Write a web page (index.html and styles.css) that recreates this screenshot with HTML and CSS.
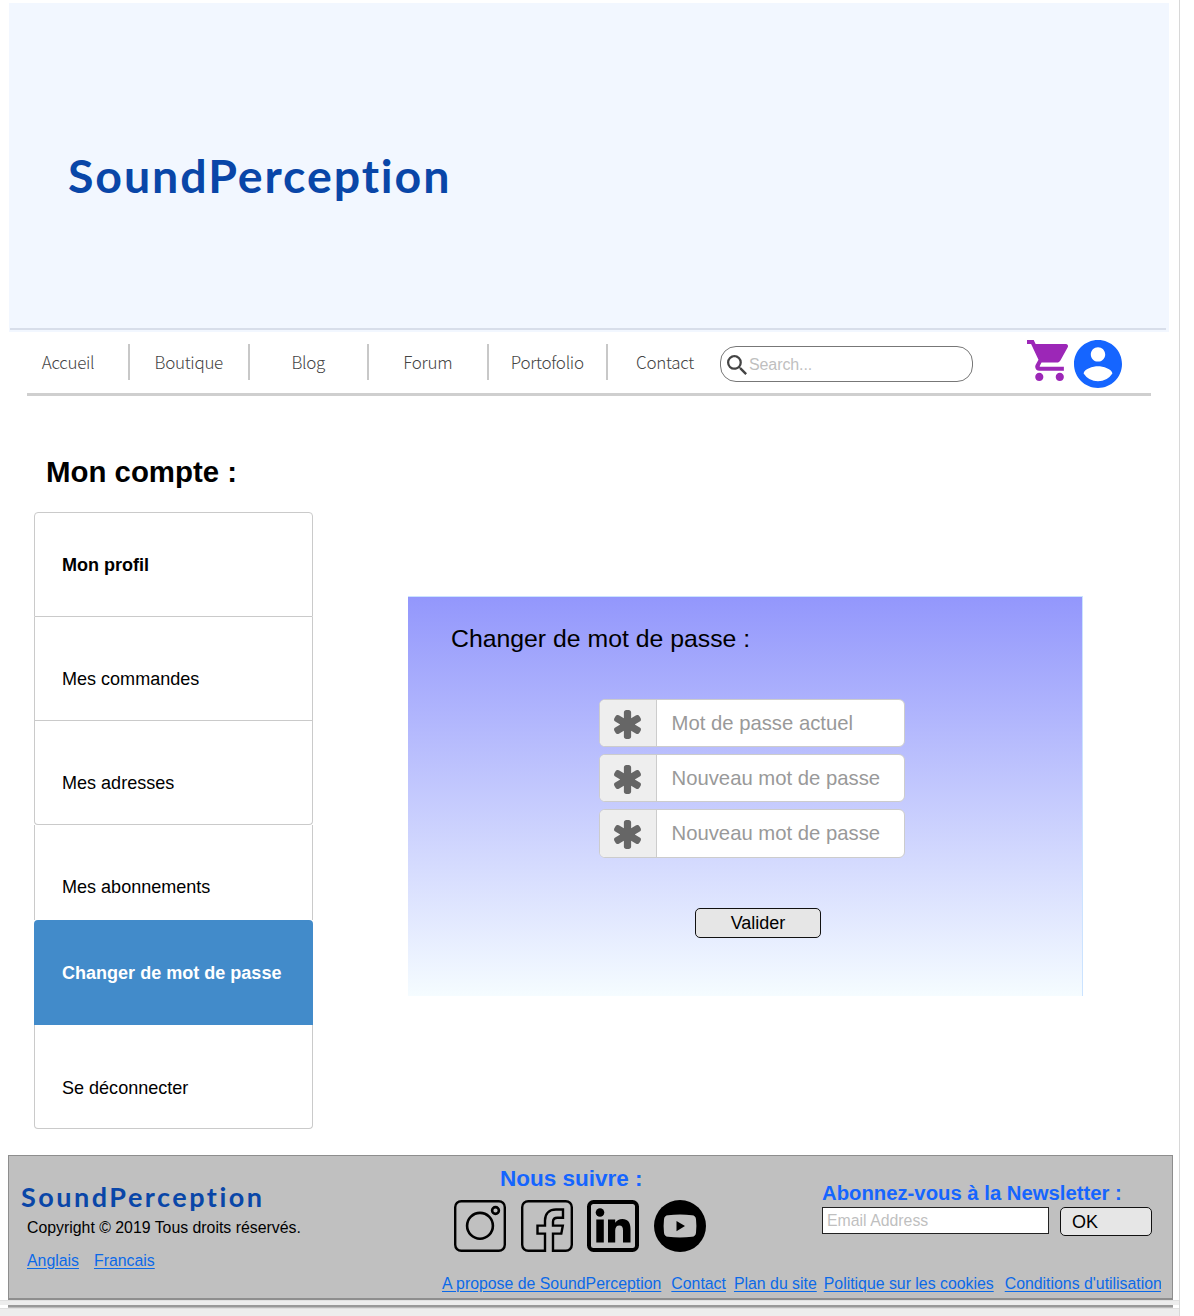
FILE: index.html
```html
<!DOCTYPE html>
<html lang="fr">
<head>
<meta charset="utf-8">
<title>SoundPerception – Mon compte</title>
<link rel="stylesheet" href="styles.css">
</head>
<body>
<div class="page">
  <header class="banner"><div class="logo">SoundPerception</div></header>
  <nav class="nav">
    <a class="nav-item">Accueil</a>
    <a class="nav-item">Boutique</a>
    <a class="nav-item">Blog</a>
    <a class="nav-item">Forum</a>
    <a class="nav-item">Portofolio</a>
    <a class="nav-item">Contact</a>
    <div class="search">
      <svg class="search-icon" viewBox="3 3 17.5 17.5"><path d="M15.5 14h-.79l-.28-.27A6.47 6.47 0 0 0 16 9.5 6.5 6.5 0 1 0 9.500 16c1.610 0 3.090-.59 4.230-1.570l.27.28v.79l5 4.990L20.490 19l-4.990-5zm-6 0C7.010 14 5 11.990 5 9.500S7.010 5 9.500 5 14 7.010 14 9.500 11.990 14 9.500 14z"/></svg>
      <span>Search...</span>
    </div>
    <svg class="cart" viewBox="1 2 20.500 20"><path d="M7 18c-1.100 0-1.990.9-1.990 2S5.900 22 7 22s2-.9 2-2-.9-2-2-2zM1 2v2h2l3.600 7.590-1.350 2.450c-.16.28-.25.61-.25.96 0 1.100.9 2 2 2h12v-2H7.420c-.14 0-.25-.11-.25-.25l.03-.12.9-1.630h7.450c.75 0 1.410-.41 1.750-1.030l3.580-6.490A1 1 0 0 0 20 4H5.210l-.94-2H1zm16 16c-1.100 0-1.990.9-1.990 2s.89 2 1.990 2 2-.9 2-2-.9-2-2-2z"/></svg>
    <svg class="user" viewBox="2 2 20 20"><path d="M12 2C6.480 2 2 6.480 2 12s4.480 10 10 10 10-4.480 10-10S17.520 2 12 2zm0 3c1.660 0 3 1.340 3 3s-1.340 3-3 3-3-1.340-3-3 1.340-3 3-3zm0 14.200a7.200 7.200 0 0 1-6-3.220c.03-1.990 4-3.080 6-3.080 1.990 0 5.970 1.090 6 3.080a7.200 7.200 0 0 1-6 3.220z"/></svg>
  </nav>
  <main class="main">
    <aside class="account">
      <h1>Mon compte :</h1>
      <ul class="menu">
        <li class="first">Mon profil</li>
        <li>Mes commandes</li>
        <li class="third">Mes adresses</li>
        <li class="short">Mes abonnements</li>
        <li class="active">Changer de mot de passe</li>
        <li class="last">Se déconnecter</li>
      </ul>
    </aside>
    <section class="panel">
      <h2>Changer de mot de passe :</h2>
      <div class="fields">
        <div class="field"><span class="addon"><svg viewBox="128 128 1536 1536"><path id="star" d="M1546 1050q46 26 59.500 77.500t-12.500 97.500l-64 110q-26 46-77.500 59.500t-97.500-12.500l-266-153v307q0 52-38 90t-90 38h-128q-52 0-90-38t-38-90v-307l-266 153q-46 26-97.500 12.500t-77.500-59.500l-64-110q-26-46-12.500-97.500t59.500-77.500l266-154-266-154q-46-26-59.500-77.500t12.500-97.500l64-110q26-46 77.500-59.500t97.500 12.500l266 153v-307q0-52 38-90t90-38h128q52 0 90 38t38 90v307l266-153q46-26 97.500-12.500t77.500 59.500l64 110q26 46 12.500 97.500t-59.500 77.500l-266 154z"/></svg></span><span class="hint">Mot de passe actuel</span></div>
        <div class="field"><span class="addon"><svg viewBox="128 128 1536 1536"><use href="#star"/></svg></span><span class="hint">Nouveau mot de passe</span></div>
        <div class="field"><span class="addon"><svg viewBox="128 128 1536 1536"><use href="#star"/></svg></span><span class="hint">Nouveau mot de passe</span></div>
      </div>
      <button class="submit">Valider</button>
    </section>
  </main>
  <footer class="footer">
    <div class="brand">
      <div class="logo-small">SoundPerception</div>
      <p>Copyright © 2019 Tous droits réservés.</p>
      <div class="langs"><a>Anglais</a><a>Francais</a></div>
    </div>
    <div class="right">
      <div class="top">
        <div class="follow">
          <h3>Nous suivre :</h3>
          <div class="social">
            <svg viewBox="0 0 52 52" fill="none" stroke="#000"><rect x="1.200" y="1.200" width="49.600" height="49.600" rx="6" stroke-width="2.400"/><circle cx="26" cy="25.800" r="12.900" stroke-width="2.600"/><circle cx="41.500" cy="10.500" r="3.400" stroke-width="2.600"/></svg>
            <svg viewBox="0 0 52 52" fill="none" stroke="#000" stroke-width="2.400"><path d="M24 50.800V33.600h-7.500v-8h7.500V20.500c0-7 4.500-11 11-11h7v8.300h-5.500c-3 0-4.500 1.200-4.500 4v3.800h9.800l-1.500 8H32v17.200h12.800a6 6 0 0 0 6-6V7.200a6 6 0 0 0-6-6H7.200a6 6 0 0 0-6 6v37.600a6 6 0 0 0 6 6z"/></svg>
            <svg viewBox="0 0 52 52"><rect x="2" y="2" width="48" height="48" rx="4.500" fill="none" stroke="#000" stroke-width="4"/><circle cx="13" cy="12.500" r="4.300"/><path d="M9.300 19.500h7.500v23H9.300zM21 19.500h7.200v3.200c1.500-2.400 4-3.800 7.200-3.800 5.500 0 8.100 3.600 8.100 10v13.600H36V30.400c0-3.200-1-5-3.600-5-2.700 0-4.200 1.900-4.200 5v12.100H21z"/></svg>
            <svg viewBox="0 0 52 52"><circle cx="26" cy="26" r="26"/><path fill="#c0c0c0" d="M14 15.200q12-1.400 24 0 3.600.3 4 4 .8 6.800 0 13.600-.4 3.700-4 4-12 1.400-24 0-3.600-.3-4-4-.8-6.800 0-13.600.4-3.700 4-4z"/><path d="M22.500 21v10.200l8.500-5.100z"/></svg>
          </div>
        </div>
        <div class="news">
          <h3>Abonnez-vous à la Newsletter :</h3>
          <div class="form"><div class="email">Email Address</div><button class="ok">OK</button></div>
        </div>
      </div>
      <div class="links"><a>A propose de SoundPerception</a><a>Contact</a><a>Plan du site</a><a>Politique sur les cookies</a><a>Conditions d'utilisation</a></div>
    </div>
  </footer>
  <div class="bar bar-top"></div>
  <div class="rule"></div>
  <div class="bar bar-bottom"></div>
</div>
</body>
</html>
```
FILE: styles.css
```css
* { box-sizing: border-box; }
body { margin: 0; background: #fff; color: #000; font-family: "Liberation Sans", Arial, sans-serif; }
h1, h2, h3, p, ul { margin: 0; padding: 0; }
svg { display: block; flex: none; }
button { font: inherit; color: #000; }
.page { width: 1180px; height: 1316px; padding-top: 3px; border-right: 1px solid #d8d8d8; overflow: hidden; }

.banner { width: 1160px; height: 329px; margin-left: 9px; padding: 142px 0 0 59px; background: linear-gradient(#d8deea, #d8deea) 1px 325px / 1156px 2px no-repeat, #f2f7ff; }
.logo { font: 700 46.500px/60px Lato, sans-serif; letter-spacing: 1.900px; color: #0946a8; }

.nav { display: flex; width: 1124px; height: 64px; margin-left: 27px; padding-top: 8px; border-bottom: 3px solid #cfcfcf; }
.nav-item { flex: none; width: 119.500px; height: 36px; margin-top: 4px; border-right: 2px solid #c8c8c8; font: 300 17px/36px "Noto Sans CJK SC", sans-serif; letter-spacing: -.3px; color: #444; text-align: center; }
.nav-item:first-child { width: 103px; padding-right: 19px; }
.nav-item:nth-child(6) { width: 114px; border: 0; }
.search { flex: none; display: flex; align-items: center; width: 253px; height: 36px; margin: 6px 0 0 -2px; padding: 1px 0 0 6px; border: 1px solid #777; border-radius: 16px; font-size: 16px; letter-spacing: -.1px; color: #bfbfbf; }
.search-icon { width: 20px; height: 20px; margin-right: 2px; fill: #444; }
.cart { width: 42px; height: 41px; margin-left: 54px; fill: #9c27b7; }
.user { width: 48px; height: 48px; margin-left: 5px; fill: #1565ff; }

.main { display: flex; height: 759px; }
.account { width: 279px; margin-left: 34px; }
h1 { margin: 58px 0 0 12px; font-size: 29.400px; line-height: 36px; }
.menu { margin-top: 22px; list-style: none; font-size: 18.050px; }
.menu li { height: 104px; padding: 21px 0 0 27px; border: 1px solid #cacaca; border-top: 0; line-height: 82px; white-space: nowrap; }
.menu .first { height: 105px; padding-top: 1px; border-top: 1px solid #cacaca; border-radius: 4px 4px 0 0; line-height: 103px; font-weight: 700; }
.menu .third { border-radius: 0 0 4px 4px; }
.menu .short { height: 95px; border-bottom: 0; }
.menu .active { height: 105px; padding: 1px 0 0 28px; border: 0; border-radius: 4px 4px 0 0; background: #428bca; color: #fff; line-height: 105px; font-weight: 700; }
.menu .last { padding-top: 22px; border-radius: 0 0 4px 4px; }

.panel { width: 675px; height: 400px; margin: 200px 0 0 95px; padding: 26px 0 0 42px; border: 1px solid #cbe3ff; border-bottom: 0; border-left: 0; padding-left: 43px; background: linear-gradient(#9397fc, #f5fcff); }
h2 { font-size: 24.800px; font-weight: 400; line-height: 32px; }
.fields { display: flex; flex-direction: column; gap: 7px; margin: 44px 0 0 148px; }
.field { display: flex; width: 306px; height: 48.200px; border: 1px solid #ccc; border-radius: 6px; background: #fff; overflow: hidden; font-size: 20.300px; }
.addon { display: flex; align-items: center; justify-content: center; width: 57px; border-right: 1px solid #ccc; background: #eee; }
.addon svg { width: 29px; height: 29px; margin: 2px 1px 0 0; fill: #666; }
.hint { padding-left: 14.500px; color: #999; line-height: 46px; }
.submit { display: block; width: 126px; height: 30px; margin: 50px 0 0 244px; padding: 1px 0 0; border: 1.500px solid #111; border-radius: 5px; background: #e6e6e6; font-size: 18px; }

.footer { display: flex; width: 1165px; height: 145px; margin-left: 8px; border: 1px solid #8e8e8e; border-bottom-width: 2px; background: #c0c0c0; font-size: 15.850px; white-space: nowrap; }
.brand { width: 433px; padding: 24px 0 0 12px; }
.logo-small { font: 700 27px/34px Lato, sans-serif; letter-spacing: 2.500px; color: #0946a8; }
.brand p { margin: 4px 0 0 6px; line-height: 20px; }
.langs { display: flex; gap: 15px; margin: 14px 0 0 6px; line-height: 18px; }
a { color: inherit; }
.langs a, .links a { color: #0b69e8; text-decoration: underline; text-underline-offset: 2px; }
.right { width: 719px; overflow: hidden; }
.top { display: flex; height: 118px; }
h3 { color: #1565ff; }
.follow { width: 380px; padding: 9px 0 0 12px; }
.follow h3 { padding-top: 1px; padding-left: 46px; font-size: 22.500px; line-height: 26px; }
.social { display: flex; gap: 14.600px; margin-top: 8px; }
.social svg { width: 52px; height: 52px; }
.news { padding-top: 25px; }
.news h3 { font-size: 20.300px; line-height: 24px; }
.form { display: flex; gap: 11px; margin-top: 2px; }
.email { width: 227px; height: 27px; padding-left: 4px; border: 1.500px solid #222; background: #fff; color: #bfbfbf; line-height: 26px; }
.ok { width: 92px; height: 29px; padding: 1px 0 0 11px; border: 1.500px solid #111; border-radius: 5px; background: #e6e6e6; text-align: left; font-size: 18px; }
.links { display: flex; line-height: 19px; }
.links a { flex: none; margin-right: 10px; }
.links a:nth-child(2) { margin-right: 8px; }
.links a:nth-child(3) { margin-right: 7px; }
.links a:nth-child(4) { margin-right: 11px; }

.bar { width: 1181px; background: #ededed; border-top: 1px solid #e0e0e0; }
.bar-top { height: 5px; }
.rule { width: 1165px; height: 3px; margin-left: 8px; border-top: 2px solid #999; background: #bbb; }
.bar-bottom { height: 8px; }
```
